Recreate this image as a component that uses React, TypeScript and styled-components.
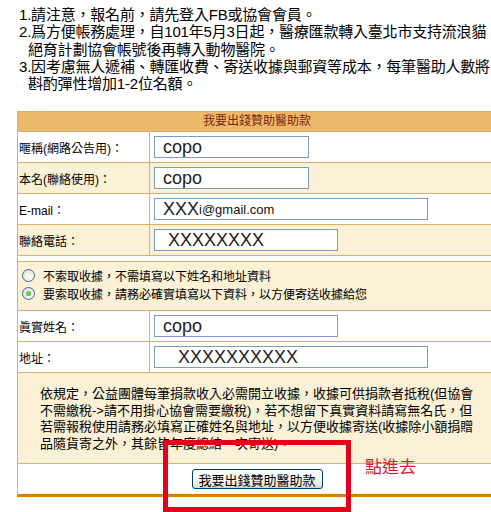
import React from 'react';
import styled, { createGlobalStyle } from 'styled-components';

const GlobalStyle = createGlobalStyle`
  html, body {
    margin: 0;
    padding: 0;
    background: #fff;
    overflow: hidden;
  }
  body {
    font-family: "Liberation Sans", Arial, "Noto Sans CJK TC", sans-serif;
    color: #000;
  }
`;

const Page = styled.div`
  position: relative;
  width: 491px;
  height: 512px;
  padding: 6px 0 0 17px;
  box-sizing: border-box;
`;

const Notice = styled.ul`
  list-style: none;
  margin: 0 0 19px;
  padding: 0 0 0 2px;
  font-size: 15px;
  line-height: 17.3px;
  letter-spacing: -0.2px;
  white-space: nowrap;
`;

const NoticeItem = styled.li`
  padding-left: 9px;
  text-indent: -9px;
`;

const Form = styled.div`
  width: 478px;
  border-top: 1px solid #dfae68;
  border-left: 1px solid #dfae68;
  border-bottom: 3px solid #e27b00;
  font-size: 12px;
`;

const Header = styled.div`
  height: 19px;
  line-height: 19px;
  text-align: center;
  background: #ecb96b;
  color: #7d2410;
  border-bottom: 1px solid #dfae68;
`;

const Row = styled.div<{ $cream?: boolean }>`
  display: flex;
  height: 31px;
  box-sizing: border-box;
  border-bottom: 1px solid #dfae68;
  background: ${(p) => (p.$cream ? '#faf1d6' : '#fff')};
`;

const Label = styled.div`
  width: 132px;
  box-sizing: border-box;
  border-right: 1px solid #dfae68;
  display: flex;
  align-items: center;
  padding-left: 1px;
  white-space: nowrap;
`;

const Value = styled.div`
  flex: 1;
  display: flex;
  align-items: center;
  padding-left: 4px;
`;

const Field = styled.div<{ $w: number }>`
  width: ${(p) => p.$w}px;
  height: 22px;
  box-sizing: border-box;
  border: 1px solid #7f9db9;
  background: #fff;
  display: flex;
  align-items: center;
  padding-left: 8px;
  font-size: 18px;
  color: #222;
  white-space: nowrap;
  overflow: hidden;
`;

const Small = styled.span`
  font-size: 13px;
  color: #111;
`;

const ChoiceBlock = styled.div`
  border-bottom: 1px solid #dfae68;
  background: #fff;
  padding-top: 5px;
`;

const Choices = styled.div`
  border-top: 1px solid #dfae68;
  background: #faf1d6;
  padding: 4px 0 4px 4px;
  height: 40px;
`;

const Choice = styled.label`
  display: flex;
  align-items: center;
  height: 18px;
  gap: 8px;
`;

const Radio = styled.span<{ $on?: boolean }>`
  position: relative;
  width: 13px;
  height: 13px;
  box-sizing: border-box;
  border-radius: 50%;
  border: 1px solid #3d6d99;
  background: radial-gradient(circle at 60% 60%, #fff 0%, #e4e3dc 70%, #c9c8c0 100%);
  &::after {
    content: '';
    display: ${(p) => (p.$on ? 'block' : 'none')};
    position: absolute;
    left: 3px;
    top: 3px;
    width: 5px;
    height: 5px;
    border-radius: 50%;
    background: radial-gradient(circle at 40% 40%, #7fe07f, #21a121);
  }
`;

const Notes = styled.div`
  background: #faf1d6;
  border-bottom: 1px solid #dfae68;
  padding: 13px 0 11px 22px;
  font-size: 13px;
  line-height: 16.5px;
  white-space: nowrap;
`;

const Actions = styled.div`
  height: 30px;
  display: flex;
  align-items: center;
  justify-content: center;
  background: #fff;
`;

const Submit = styled.button`
  width: 131px;
  height: 20px;
  padding: 0;
  border: 1px solid #003c74;
  border-radius: 3px;
  background: linear-gradient(#ffffff, #f4f4f0 60%, #e3e1d8 90%, #d6d0c5);
  font-family: "Liberation Sans", Arial, "Noto Sans CJK TC", sans-serif;
  font-size: 13px;
  color: #000;
`;

const Hint = styled.span`
  position: absolute;
  left: 365px;
  top: 458px;
  font-size: 17px;
  line-height: 20px;
  color: #d0203a;
`;

const Highlight = styled.div`
  position: absolute;
  left: 163px;
  top: 440px;
  width: 188px;
  height: 72px;
  box-sizing: border-box;
  border: 5px solid #e2001a;
  pointer-events: none;
`;

export default function App() {
  return (
    <Page>
      <GlobalStyle />
      <Notice>
        <NoticeItem>1.請注意，報名前，請先登入FB或協會會員。</NoticeItem>
        <NoticeItem>
          2.爲方便帳務處理，自101年5月3日起，醫療匯款轉入臺北市支持流浪貓
          <br />
          絕育計劃協會帳號後再轉入動物醫院。
        </NoticeItem>
        <NoticeItem>
          3.因考慮無人遞補、轉匯收費、寄送收據與郵資等成本，每筆醫助人數將
          <br />
          斟酌彈性增加1-2位名額。
        </NoticeItem>
      </Notice>

      <Form>
        <Header>我要出錢贊助醫助款</Header>
        <Row>
          <Label>暱稱(網路公告用)：</Label>
          <Value>
            <Field $w={155}>copo</Field>
          </Value>
        </Row>
        <Row $cream>
          <Label>本名(聯絡使用)：</Label>
          <Value>
            <Field $w={155}>copo</Field>
          </Value>
        </Row>
        <Row>
          <Label>E-mail：</Label>
          <Value>
            <Field $w={274}>
              XXX<Small>i@gmail.com</Small>
            </Field>
          </Value>
        </Row>
        <Row $cream>
          <Label>聯絡電話：</Label>
          <Value>
            <Field $w={184}>&nbsp;XXXXXXXX</Field>
          </Value>
        </Row>
        <ChoiceBlock>
          <Choices>
            <Choice>
              <Radio />
              不索取收據，不需填寫以下姓名和地址資料
            </Choice>
            <Choice>
              <Radio $on />
              要索取收據，請務必確實填寫以下資料，以方便寄送收據給您
            </Choice>
          </Choices>
        </ChoiceBlock>
        <Row>
          <Label>眞實姓名：</Label>
          <Value>
            <Field $w={184}>copo</Field>
          </Value>
        </Row>
        <Row>
          <Label>地址：</Label>
          <Value>
            <Field $w={274}>&nbsp;&nbsp;&nbsp;XXXXXXXXXX</Field>
          </Value>
        </Row>
        <Notes>
          依規定，公益團體每筆捐款收入必需開立收據，收據可供捐款者抵稅(但協會
          <br />
          不需繳稅-&gt;請不用掛心協會需要繳稅)，若不想留下真實資料請寫無名氏，但
          <br />
          若需報稅使用請務必填寫正確姓名與地址，以方便收據寄送(收據除小額捐贈
          <br />
          品隨貨寄之外，其餘皆年度總結一次寄送)。
        </Notes>
        <Actions>
          <Submit type="button">我要出錢贊助醫助款</Submit>
        </Actions>
      </Form>

      <Hint>點進去</Hint>
      <Highlight />
    </Page>
  );
}
